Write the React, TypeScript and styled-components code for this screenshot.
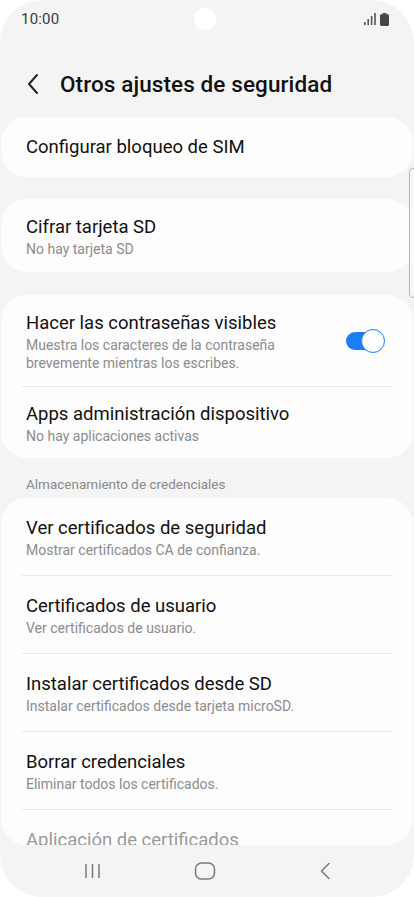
import styled, { createGlobalStyle } from "styled-components";

const GlobalStyle = createGlobalStyle`
    html, body {
        margin: 0;
        padding: 0;
        background: #ffffff;
    }
    * {
        box-sizing: border-box;
    }
`;

const Screen = styled.div`
    position: relative;
    width: 414px;
    height: 897px;
    border-radius: 42px;
    background: #f4f4f4;
    overflow: hidden;
    display: flex;
    flex-direction: column;
    font-family: Roboto, "Noto Sans", sans-serif;
    color: #111;
`;

const StatusBar = styled.div`
    height: 38px;
    flex-shrink: 0;
    display: grid;
    grid-template-columns: 1fr 22px 1fr;
    align-items: center;
    padding: 0 25px 0 21px;
`;

const Clock = styled.span`
    font-size: 15px;
    color: #3b3b3b;
    letter-spacing: 0.2px;
`;

const Camera = styled.div`
    width: 22px;
    height: 22px;
    border-radius: 50%;
    background: #ffffff;
`;

const StatusIcons = styled.div`
    justify-self: end;
    display: flex;
    align-items: center;
    gap: 4px;
`;

const Header = styled.div`
    height: 79px;
    flex-shrink: 0;
    display: flex;
    align-items: center;
    padding: 12px 0 0 26px;
    gap: 20px;
`;

const Title = styled.h1`
    margin: 0;
    font-size: 22.5px;
    font-weight: 500;
    color: #111;
    letter-spacing: 0.1px;
`;

const Content = styled.div`
    flex: 1;
    min-height: 0;
    display: flex;
    flex-direction: column;
    padding: 0 1px;
`;

const Card = styled.div<{ $fill?: boolean }>`
    background: #fdfdfd;
    border-radius: 26px;
    overflow: hidden;
    flex-shrink: 0;
    ${(p) => (p.$fill ? "flex: 1; min-height: 0;" : "")}
`;

const Gap = styled.div<{ $h: number }>`
    height: ${(p) => p.$h}px;
    flex-shrink: 0;
`;

const Row = styled.div<{ $top: number; $bottom: number }>`
    display: flex;
    align-items: center;
    padding: ${(p) => p.$top}px 28px ${(p) => p.$bottom}px 25px;
`;

const RowText = styled.div`
    flex: 1;
    display: flex;
    flex-direction: column;
`;

const ItemTitle = styled.div<{ $faded?: boolean }>`
    font-size: 18.5px;
    line-height: 26px;
    color: ${(p) => (p.$faded ? "#9a9a9a" : "#111")};
`;

const ItemSub = styled.div`
    font-size: 14px;
    line-height: 18px;
    color: #8c8c8c;
`;

const Divider = styled.div`
    height: 1px;
    background: #e8e8e8;
    margin: 0 20px 0 21px;
`;

const SectionLabel = styled.div`
    font-size: 13.5px;
    line-height: 16px;
    color: #8a8a8a;
    padding: 18px 25px 6px;
    flex-shrink: 0;
`;

const Toggle = styled.div`
    position: relative;
    width: 39px;
    height: 24px;
    flex-shrink: 0;
`;

const Track = styled.div`
    position: absolute;
    left: 0;
    top: 3px;
    width: 36px;
    height: 18px;
    border-radius: 9px;
    background: #1a7ef5;
`;

const Thumb = styled.div`
    position: absolute;
    right: 0;
    top: 0;
    width: 24px;
    height: 24px;
    border-radius: 50%;
    background: #ffffff;
    border: 1.5px solid #1a7ef5;
`;

const NavBar = styled.div`
    height: 52px;
    flex-shrink: 0;
    display: flex;
    align-items: center;
    padding-left: 85px;
`;

const NavButton = styled.div<{ $ml: number }>`
    display: flex;
    margin-left: ${(p) => p.$ml}px;
`;

const Scrollbar = styled.div`
    position: absolute;
    right: -3px;
    top: 168px;
    width: 8px;
    height: 130px;
    border-radius: 4px;
    border: 1px solid #b4b4b4;
    background: #f8f8f8;
`;

const Back = () => (
    <svg width="14" height="22" viewBox="0 0 14 22">
        <polyline
            points="11,2 3,11 11,20"
            fill="none"
            stroke="#222"
            strokeWidth="2"
            strokeLinecap="round"
            strokeLinejoin="round"
        />
    </svg>
);

const Signal = () => (
    <svg width="12" height="12" viewBox="0 0 12 12">
        <rect x="0" y="9" width="1.6" height="3" fill="#555" />
        <rect x="3.4" y="6" width="1.6" height="6" fill="#555" />
        <rect x="6.8" y="3" width="1.6" height="9" fill="#555" />
        <rect x="10.2" y="0" width="1.6" height="12" fill="#555" />
    </svg>
);

const Battery = () => (
    <svg width="9" height="13" viewBox="0 0 9 13">
        <rect x="2.5" y="0" width="4" height="1.5" fill="#444" />
        <rect x="0" y="1.2" width="9" height="11.8" rx="1.4" fill="#444" />
    </svg>
);

const RecentsIcon = () => (
    <svg width="15" height="16" viewBox="0 0 15 16">
        <line x1="1" y1="1" x2="1" y2="15" stroke="#7a7a7a" strokeWidth="1.5" />
        <line x1="7.5" y1="1" x2="7.5" y2="15" stroke="#7a7a7a" strokeWidth="1.5" />
        <line x1="14" y1="1" x2="14" y2="15" stroke="#7a7a7a" strokeWidth="1.5" />
    </svg>
);

const HomeIcon = () => (
    <svg width="22" height="18" viewBox="0 0 22 18">
        <rect x="1.5" y="1" width="19" height="16" rx="6" fill="none" stroke="#7a7a7a" strokeWidth="1.5" />
    </svg>
);

const BackNavIcon = () => (
    <svg width="12" height="18" viewBox="0 0 12 18">
        <polyline
            points="10,1.5 2.5,9 10,16.5"
            fill="none"
            stroke="#7a7a7a"
            strokeWidth="1.5"
            strokeLinecap="round"
            strokeLinejoin="round"
        />
    </svg>
);

const certs = [
    { title: "Ver certificados de seguridad", sub: "Mostrar certificados CA de confianza." },
    { title: "Certificados de usuario", sub: "Ver certificados de usuario." },
    { title: "Instalar certificados desde SD", sub: "Instalar certificados desde tarjeta microSD." },
    { title: "Borrar credenciales", sub: "Eliminar todos los certificados." },
    { title: "Aplicación de certificados", sub: "" },
];

export default function App() {
    return (
        <>
            <GlobalStyle />
            <Screen>
                <StatusBar>
                    <Clock>10:00</Clock>
                    <Camera />
                    <StatusIcons>
                        <Signal />
                        <Battery />
                    </StatusIcons>
                </StatusBar>
                <Header>
                    <Back />
                    <Title>Otros ajustes de seguridad</Title>
                </Header>
                <Content>
                    <Card>
                        <Row $top={17} $bottom={17}>
                            <RowText>
                                <ItemTitle>Configurar bloqueo de SIM</ItemTitle>
                            </RowText>
                        </Row>
                    </Card>
                    <Gap $h={22} />
                    <Card>
                        <Row $top={15} $bottom={14}>
                            <RowText>
                                <ItemTitle>Cifrar tarjeta SD</ItemTitle>
                                <ItemSub>No hay tarjeta SD</ItemSub>
                            </RowText>
                        </Row>
                    </Card>
                    <Gap $h={23} />
                    <Card>
                        <Row $top={15} $bottom={14}>
                            <RowText>
                                <ItemTitle>Hacer las contraseñas visibles</ItemTitle>
                                <ItemSub>
                                    Muestra los caracteres de la contraseña
                                    <br />
                                    brevemente mientras los escribes.
                                </ItemSub>
                            </RowText>
                            <Toggle>
                                <Track />
                                <Thumb />
                            </Toggle>
                        </Row>
                        <Divider />
                        <Row $top={14} $bottom={13}>
                            <RowText>
                                <ItemTitle>Apps administración dispositivo</ItemTitle>
                                <ItemSub>No hay aplicaciones activas</ItemSub>
                            </RowText>
                        </Row>
                    </Card>
                    <SectionLabel>Almacenamiento de credenciales</SectionLabel>
                    <Card $fill>
                        {certs.map((c, i) => (
                            <div key={c.title}>
                                {i > 0 && <Divider />}
                                <Row $top={17} $bottom={16}>
                                    <RowText>
                                        <ItemTitle $faded={i === certs.length - 1}>
                                            {c.title}
                                        </ItemTitle>
                                        {c.sub && <ItemSub>{c.sub}</ItemSub>}
                                    </RowText>
                                </Row>
                            </div>
                        ))}
                    </Card>
                </Content>
                <NavBar>
                    <NavButton $ml={0}>
                        <RecentsIcon />
                    </NavButton>
                    <NavButton $ml={94}>
                        <HomeIcon />
                    </NavButton>
                    <NavButton $ml={103}>
                        <BackNavIcon />
                    </NavButton>
                </NavBar>
                <Scrollbar />
            </Screen>
        </>
    );
}
